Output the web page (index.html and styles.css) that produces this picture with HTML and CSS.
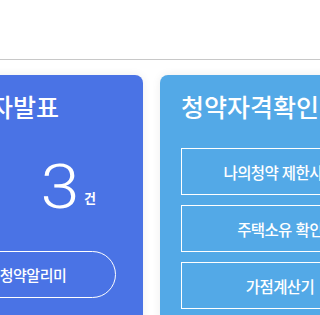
FILE: index.html
```html
<!DOCTYPE html>
<html lang="ko">
<head>
<meta charset="utf-8">
<link rel="stylesheet" href="styles.css">
</head>
<body>
<header class="topbar"></header>
<main class="cards">
  <section class="card card-blue">
    <h2 class="card-title">당첨자발표</h2>
    <div class="count-row">
      <span class="count-num">3</span><span class="count-unit">건</span>
    </div>
    <div class="pill-row">
      <a class="pill">청약알리미</a>
    </div>
  </section>
  <section class="card card-sky">
    <h2 class="card-title">청약자격확인</h2>
    <div class="box-list">
      <a class="box">나의청약 제한사항</a>
      <a class="box">주택소유 확인</a>
      <a class="box">가점계산기</a>
    </div>
  </section>
</main>
</body>
</html>
```

FILE: styles.css
```css
html, body {
  margin: 0;
  padding: 0;
  background: #ffffff;
  overflow: hidden;
}
body {
  width: 320px;
  height: 315px;
  font-family: "Noto Sans CJK KR", "Noto Sans", sans-serif;
}
.topbar {
  height: 59px;
  border-bottom: 1px solid #c8c8c8;
}
.cards {
  display: flex;
  gap: 17px;
  padding-top: 15px;
  margin-left: -77px;
}
.card {
  flex: none;
  height: 300px;
  border-radius: 8px;
  padding: 0 21px;
  box-sizing: border-box;
  box-shadow: 0 0 10px rgba(0, 0, 0, 0.07);
  color: #ffffff;
}
.card-blue {
  width: 220px;
  background: #4a73e5;
}
.card-sky {
  width: 248px;
  background: #53a9e7;
}
.card-title {
  margin: 15px 0 0;
  font-size: 25px;
  line-height: 32px;
  font-weight: 500;
  letter-spacing: 0;
  white-space: nowrap;
}
.count-row {
  display: flex;
  justify-content: flex-end;
  align-items: flex-end;
  margin-top: 35px;
  padding-right: 26px;
}
.count-num {
  display: inline-block;
  font-family: Roboto, "Liberation Sans", sans-serif;
  font-weight: 300;
  font-size: 61px;
  line-height: 60px;
  transform: scaleX(1.15);
}
.count-unit {
  margin-left: 7px;
  margin-bottom: 11px;
  font-size: 13px;
  line-height: 16px;
  font-weight: 700;
}
.pill-row {
  display: flex;
  justify-content: center;
  margin-top: 34px;
}
.pill {
  width: 165px;
  height: 47px;
  box-sizing: border-box;
  border: 1px solid #ffffff;
  border-radius: 24px;
  display: flex;
  align-items: center;
  justify-content: center;
  font-size: 15px;
  font-weight: 500;
  letter-spacing: -0.5px;
  flex: none;
}
.box-list {
  display: flex;
  flex-direction: column;
  gap: 10px;
  margin-top: 26px;
}
.box {
  width: 198px;
  height: 47px;
  box-sizing: border-box;
  border: 1px solid #ffffff;
  display: flex;
  align-items: center;
  justify-content: center;
  font-size: 15.5px;
  font-weight: 500;
  letter-spacing: -0.6px;
  white-space: nowrap;
}
```
